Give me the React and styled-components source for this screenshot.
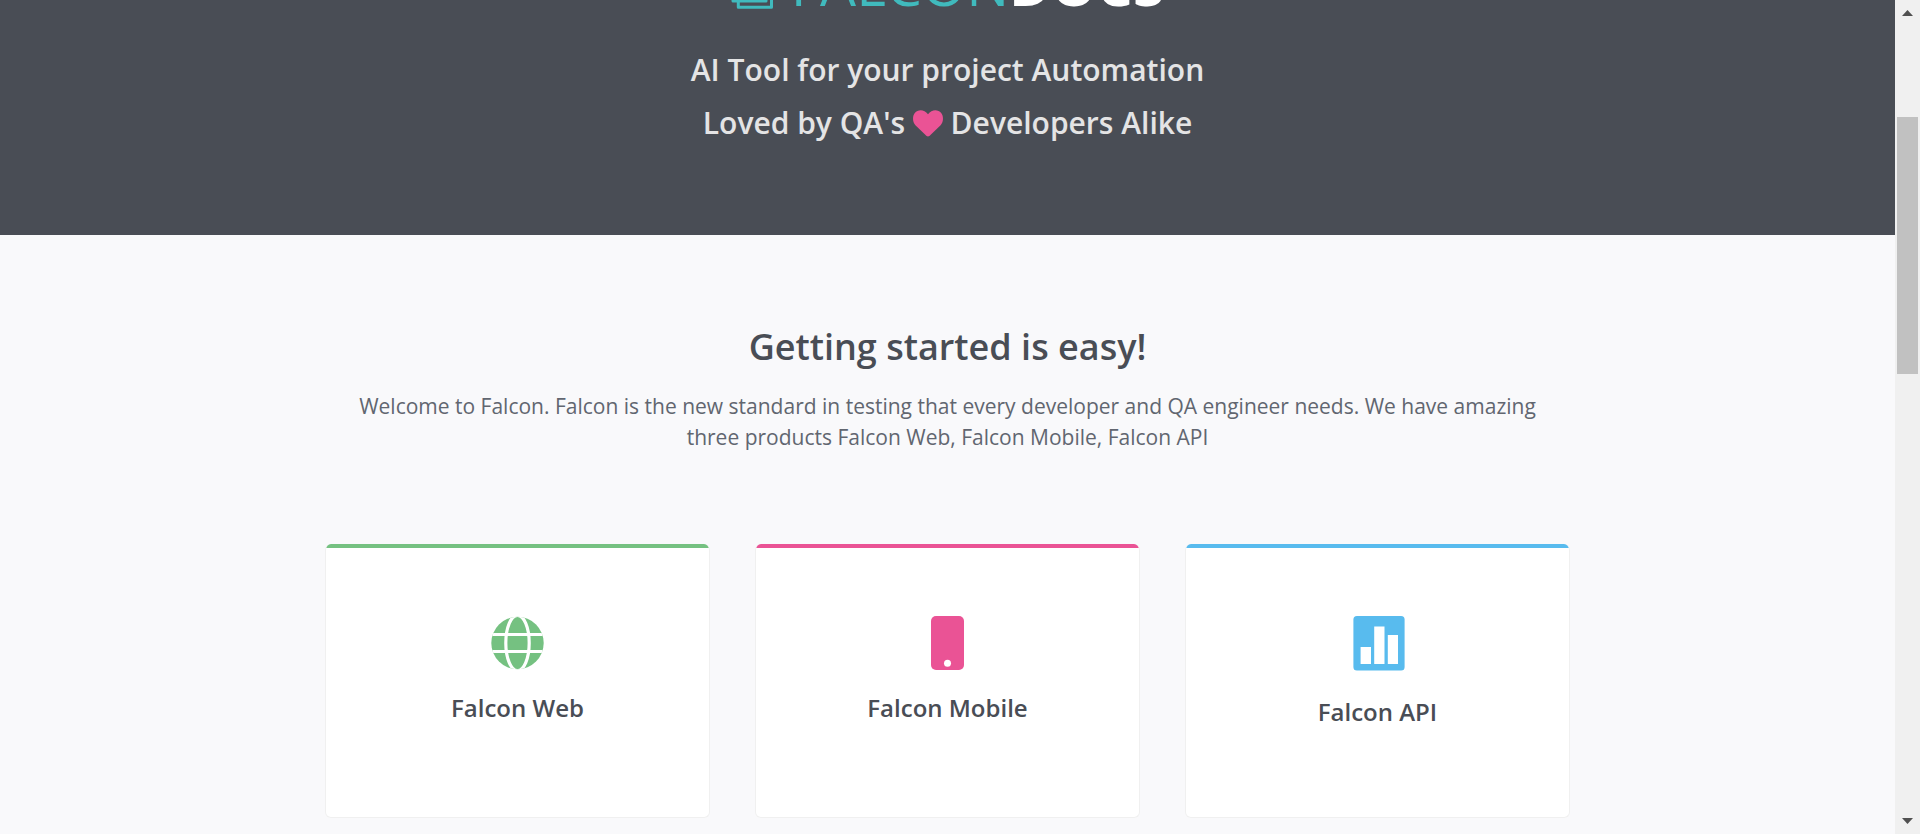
import React from 'react';
import styled, { createGlobalStyle } from 'styled-components';

const GlobalStyle = createGlobalStyle`
  *, *::before, *::after { box-sizing: border-box; }
  body {
    margin: 0;
    background: #f9f9fb;
    color: #494d55;
    font-family: "Open Sans", Arial, sans-serif;
  }
  h1, h2, h3, p { margin: 0; }
`;

const Layout = styled.div`
  display: grid;
  grid-template-columns: minmax(0, 1fr) 25px;
  min-height: 100vh;
`;

const Hero = styled.header`
  display: flex;
  flex-direction: column;
  align-items: center;
  justify-content: flex-end;
  height: 235px;
  padding-bottom: 86px;
  overflow: hidden;
  background: #494d55;
  text-align: center;
`;

const Brand = styled.h1`
  display: flex;
  flex-shrink: 0;
  align-items: center;
  gap: 18px;
  margin-bottom: 25px;
  color: #40babd;
  font-size: 57px;
  font-weight: 400;
  line-height: 68px;

  strong { color: #fff; font-weight: 700; }
`;

const Tagline = styled.p`
  flex-shrink: 0;
  color: #e4e4e5;
  font-size: 30px;
  font-weight: 600;
  line-height: 53px;

  svg { vertical-align: -3px; }
`;

const Section = styled.section`
  padding: 88px 24px 17px;
  text-align: center;
`;

const Title = styled.h2`
  margin-bottom: 20px;
  font-size: 36px;
  font-weight: 600;
  line-height: 48px;
`;

const Intro = styled.p`
  max-width: 1200px;
  margin: 0 auto 91px;
  color: #616670;
  font-size: 21px;
  line-height: 31px;
`;

const Cards = styled.div`
  display: grid;
  grid-template-columns: repeat(3, minmax(0, 1fr));
  gap: 45px;
  max-width: 1245px;
  margin: 0 auto;
`;

const Card = styled.article`
  position: relative;
  min-height: 274px;
  padding: 72px 20px 40px;
  overflow: hidden;
  border: 1px solid #f0f0f0;
  border-top: 0;
  border-radius: 6px;
  background: #fff;

  &::before {
    content: "";
    position: absolute;
    inset: 0 -1px auto;
    height: 4px;
    background: ${({ $color }) => $color};
  }

  svg { display: block; margin: 0 auto ${({ $gap }) => $gap}px; }
`;

const CardTitle = styled.h3`
  font-size: 24px;
  font-weight: 600;
  line-height: 32px;
`;

const Scrollbar = styled.aside`
  position: sticky;
  top: 0;
  display: flex;
  flex-direction: column;
  align-items: center;
  justify-content: space-between;
  height: 100vh;
  padding: 10px 2px;
  background: #f0f0f0;
`;

const Thumb = styled.div`
  width: 21px;
  height: 257px;
  margin: 101px 0 auto;
  background: #c1c1c1;
`;

const DocsIcon = () => (
  <svg width="42" height="50" viewBox="0 0 42 50" fill="none" stroke="#40babd" strokeWidth="3" aria-hidden="true">
    <path d="M7.300 36H35V2H2V42H35V36M7.300 42V48.300H40.500V10H35" strokeLinejoin="round" />
  </svg>
);

const HeartIcon = () => (
  <svg width="30" height="27" viewBox="0 0 30 27" fill="#ea5395" aria-label="love" role="img">
    <path d="M15 26.500C14 26.500 13.300 25.800 12.300 24.800L2.400 15.200C-.5 12-.8 6.500 1.800 3.100C5-.9 11.200-.8 15 4.200C18.800-.8 25-.9 28.200 3.100C30.800 6.500 30.500 12 27.600 15.200L17.700 24.800C16.700 25.800 16 26.500 15 26.500Z" />
  </svg>
);

const GlobeIcon = () => (
  <svg width="53" height="54" viewBox="0 0 53 54" aria-hidden="true">
    <defs>
      <clipPath id="globe-edge"><circle cx="26.500" cy="27" r="26.200" /></clipPath>
    </defs>
    <g clipPath="url(#globe-edge)">
      <rect width="53" height="54" fill="#75c181" />
      <ellipse cx="26.500" cy="27" rx="11.700" ry="27.700" fill="none" stroke="#fff" strokeWidth="3.200" />
      <path d="M0 18.500H53M0 35.500H53" stroke="#fff" strokeWidth="3" />
    </g>
  </svg>
);

const PhoneIcon = () => (
  <svg width="33" height="54" viewBox="0 0 33 54" aria-hidden="true">
    <rect width="33" height="54" rx="5" fill="#ea5395" />
    <circle cx="16.500" cy="47.300" r="3.500" fill="#fff" />
  </svg>
);

const ChartIcon = () => (
  <svg width="55" height="55" viewBox="-3 0 55 55" aria-hidden="true">
    <rect x=".4" width="51.200" height="54.600" rx="3.500" fill="#58bbee" />
    <path d="M7.600 31H18V48H7.600ZM21.200 10.500H31.500V48H21.200ZM34.800 19H45V48H34.800Z" fill="#fff" />
  </svg>
);

const Arrow = ({ down }) => (
  <svg width="11" height="6" viewBox="0 0 11 6" fill="#505050" aria-hidden="true">
    <path d={down ? 'M0 0H11L5.500 6Z' : 'M0 6H11L5.500 0Z'} />
  </svg>
);

const products = [
  { name: 'Falcon Web', color: '#75c181', Icon: GlobeIcon, gap: 22 },
  { name: 'Falcon Mobile', color: '#ea5395', Icon: PhoneIcon, gap: 22 },
  { name: 'Falcon API', color: '#58bbee', Icon: ChartIcon, gap: 25 },
];

export default function App() {
  return (
    <>
      <GlobalStyle />
      <Layout>
        <main>
          <Hero>
            <Brand><DocsIcon /><span>FALCON<strong>DOCS</strong></span></Brand>
            <Tagline>AI Tool for your project Automation</Tagline>
            <Tagline>Loved by QA's <HeartIcon /> Developers Alike</Tagline>
          </Hero>
          <Section>
            <Title>Getting started is easy!</Title>
            <Intro>
              Welcome to Falcon. Falcon is the new standard in testing that every developer and QA engineer
              needs. We have amazing three products Falcon Web, Falcon Mobile, Falcon API
            </Intro>
            <Cards>
              {products.map(({ name, color, Icon, gap }) => (
                <Card key={name} $color={color} $gap={gap}>
                  <Icon />
                  <CardTitle>{name}</CardTitle>
                </Card>
              ))}
            </Cards>
          </Section>
        </main>
        <Scrollbar aria-hidden="true">
          <Arrow />
          <Thumb />
          <Arrow down />
        </Scrollbar>
      </Layout>
    </>
  );
}
